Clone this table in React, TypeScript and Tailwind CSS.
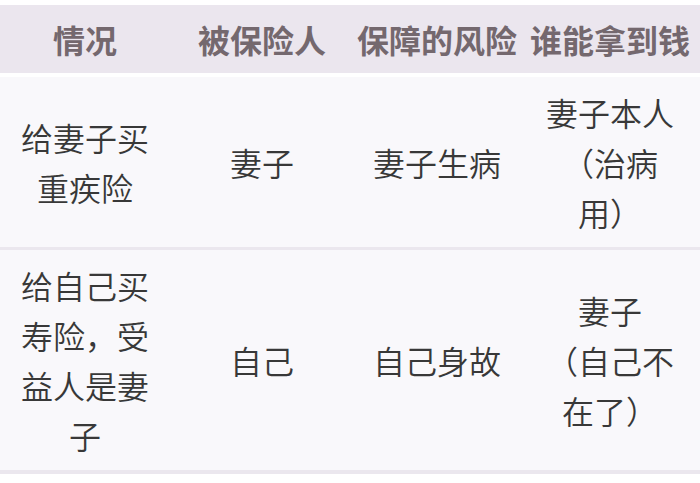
const rows = [
  ["给妻子买重疾险", "妻子", "妻子生病", "妻子本人\n（治病用）"],
  ["给自己买寿险，受益人是妻子", "自己", "自己身故", "妻子\n（自己不在了）"],
];

const headers = ["情况", "被保险人", "保障的风险", "谁能拿到钱"];

export default function App() {
  return (
    <div className="w-[700px] h-[483px] bg-white pt-[5px] font-['Noto_Sans_CJK_SC',sans-serif] text-[32px] leading-[50px] [text-spacing-trim:space-all]">
      {/* Header */}
      <div className="grid grid-cols-[170px_184px_166px_180px] h-[68px] bg-[#ebe6ee] text-[#74686e] font-bold">
        {headers.map((h) => (
          <div key={h} className="flex items-center justify-center text-center whitespace-nowrap">
            {h}
          </div>
        ))}
      </div>

      {/* Body */}
      <div className="mt-[4px]">
        {rows.map((row, i) => (
          <div
            key={i}
            className={`grid grid-cols-[170px_184px_166px_180px] bg-[#f9f8fb] text-[#383838] font-[350] border-b-[3px] border-[#ebe7ee] ${
              i === 0 ? "h-[173px]" : "h-[224px] border-b-[4px]"
            }`}
          >
            {row.map((cell, j) => (
              <div key={j} className="flex items-center justify-center px-4">
                <p className="text-center whitespace-pre-line">{cell}</p>
              </div>
            ))}
          </div>
        ))}
      </div>
    </div>
  );
}
